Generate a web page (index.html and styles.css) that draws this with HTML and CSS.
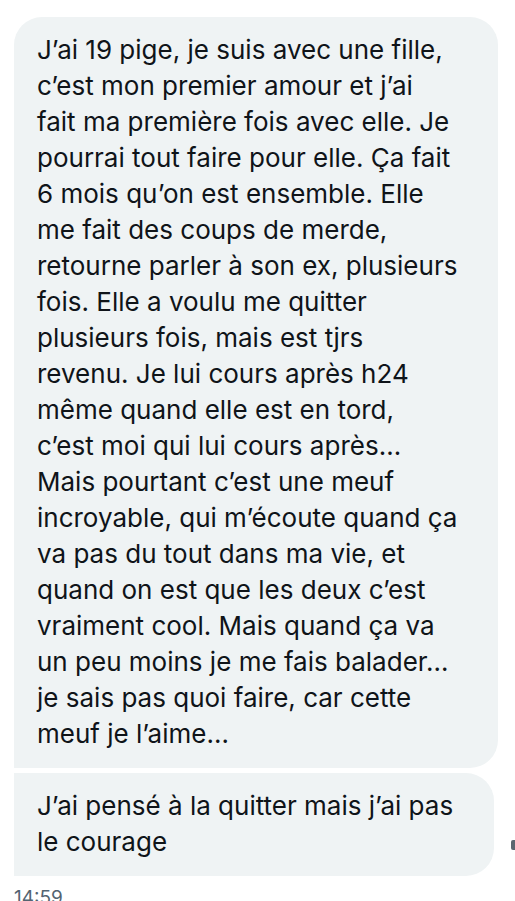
FILE: index.html
```html
<!DOCTYPE html>
<html lang="fr">

<head>
    <meta charset="UTF-8">
    <meta name="viewport" content="width=device-width, initial-scale=1.0">
    <title>Messages</title>
    <link rel="stylesheet" href="styles.css">
</head>

<body>

    <section class="conversation">
        <div class="message-row">
            <div class="bubble bubble-first">
                J’ai 19 pige, je suis avec une fille,<br>
                c’est mon premier amour et j’ai<br>
                fait ma première fois avec elle. Je<br>
                pourrai tout faire pour elle. Ça fait<br>
                6 mois qu’on est ensemble. Elle<br>
                me fait des coups de merde,<br>
                retourne parler à son ex, plusieurs<br>
                fois. Elle a voulu me quitter<br>
                plusieurs fois, mais est tjrs<br>
                revenu. Je lui cours après h24<br>
                même quand elle est en tord,<br>
                c’est moi qui lui cours après…<br>
                Mais pourtant c’est une meuf<br>
                incroyable, qui m’écoute quand ça<br>
                va pas du tout dans ma vie, et<br>
                quand on est que les deux c’est<br>
                vraiment cool. Mais quand ça va<br>
                un peu moins je me fais balader…<br>
                je sais pas quoi faire, car cette<br>
                meuf je l’aime…
            </div>
        </div>

        <div class="message-row">
            <div class="bubble bubble-last">
                J’ai pensé à la quitter mais j’ai pas<br>
                le courage
            </div>
            <!-- icon cut off by the screen edge -->
            <span class="edge-icon"></span>
        </div>

        <p class="timestamp">14:59</p>
    </section>

</body>

</html>
```

FILE: styles.css
```css
body, html {
    margin: 0;
    padding: 0;
    background: #fff;
    font-family: 'Inter', 'Liberation Sans', sans-serif;
    color: #0f1419;
    overflow: hidden;
}

.conversation {
    padding: 17px 0 0 14px;
    display: flex;
    flex-direction: column;
    gap: 5px;
}

.message-row {
    display: flex;
    align-items: flex-start;
}

.bubble {
    background-color: #eff3f4;
    font-size: 26px;
    line-height: 36px;
    padding: 15px 23px 16px;
    box-sizing: border-box;
    white-space: nowrap;
}

.bubble-first {
    width: 484px;
    border-radius: 28px 28px 28px 0;
}

.bubble-last {
    width: 481px;
    border-radius: 0 28px 28px 0;
}

.edge-icon {
    margin-left: 17px;
    margin-top: 67px;
    width: 4px;
    height: 10px;
    border-radius: 2px 0 0 2px;
    background: #5b6670;
}

.timestamp {
    margin: 5px 0 0;
    font-size: 19px;
    color: #536471;
}
```
